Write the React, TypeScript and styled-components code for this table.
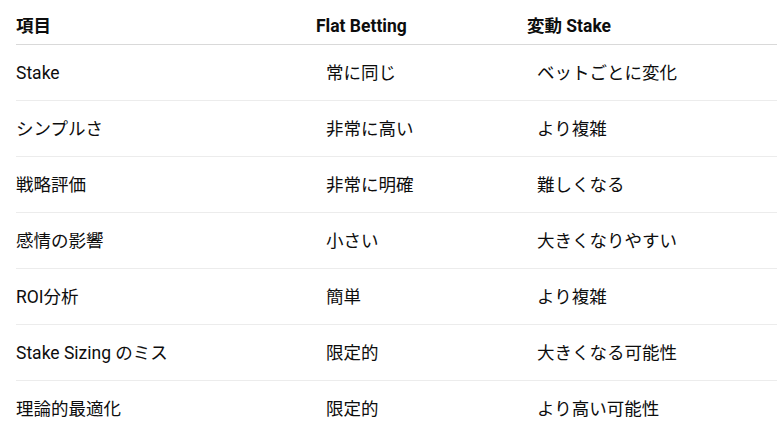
import * as React from 'react'
import styled, { createGlobalStyle } from 'styled-components'

const GlobalStyle = createGlobalStyle`
  body {
    margin: 0;
    background: #ffffff;
    font-family: Roboto, "Noto Sans CJK JP", sans-serif;
    color: #0d0d0d;
  }
`

const Wrapper = styled.section`
  padding-left: 16px;
`

const Table = styled.div`
  display: grid;
  grid-template-columns: 300px 211px 1fr;
`

const HeadCell = styled.div`
  padding: 14px 0 6px;
  font-size: 17.5px;
  line-height: 24px;
  font-weight: 700;
  border-bottom: 1px solid #d9d9d9;
`

const Cell = styled.div<{ $first?: boolean; $last?: boolean }>`
  padding: 16px 0 15px ${p => (p.$first ? '0' : '10px')};
  font-size: 17.5px;
  line-height: 24px;
  border-bottom: 1px solid ${p => (p.$last ? 'transparent' : '#ececec')};
`

const rows: [string, string, string][] = [
  ['Stake', '常に同じ', 'ベットごとに変化'],
  ['シンプルさ', '非常に高い', 'より複雑'],
  ['戦略評価', '非常に明確', '難しくなる'],
  ['感情の影響', '小さい', '大きくなりやすい'],
  ['ROI分析', '簡単', 'より複雑'],
  ['Stake Sizing のミス', '限定的', '大きくなる可能性'],
  ['理論的最適化', '限定的', 'より高い可能性'],
]

export default function App() {
  return (
    <Wrapper>
      <GlobalStyle />
      <Table>
        <HeadCell>項目</HeadCell>
        <HeadCell>Flat Betting</HeadCell>
        <HeadCell>変動 Stake</HeadCell>
        {rows.map((r, i) =>
          r.map((text, j) => (
            <Cell key={`${i}-${j}`} $first={j === 0} $last={i === rows.length - 1}>
              {text}
            </Cell>
          ))
        )}
      </Table>
    </Wrapper>
  )
}
